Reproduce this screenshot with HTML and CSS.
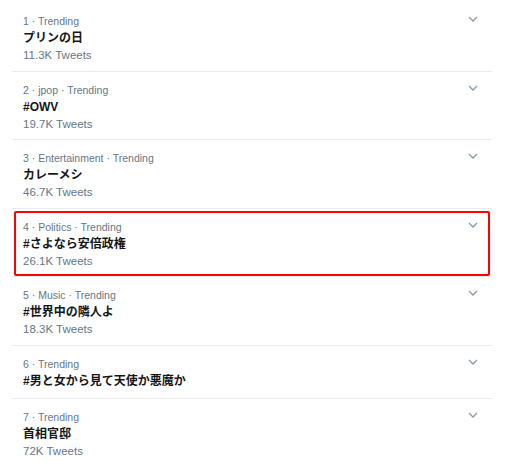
FILE: index.html
```html
<!DOCTYPE html>
<html lang="ja">
<head>
<meta charset="utf-8">
<link rel="stylesheet" href="styles.css">
</head>
<body>
<div class="trends">
  <div class="trend">
    <div class="text">
      <div class="meta">1 · Trending</div>
      <div class="title">プリンの日</div>
      <div class="count">11.3K Tweets</div>
    </div>
    <svg class="chev" viewBox="0 0 10 6" width="10" height="6"><path d="M1 1 L5 5 L9 1" fill="none" stroke="#8899a6" stroke-width="1.3"/></svg>
  </div>
  <div class="trend">
    <div class="text">
      <div class="meta">2 · jpop · Trending</div>
      <div class="title">#OWV</div>
      <div class="count">19.7K Tweets</div>
    </div>
    <svg class="chev" viewBox="0 0 10 6" width="10" height="6"><path d="M1 1 L5 5 L9 1" fill="none" stroke="#8899a6" stroke-width="1.3"/></svg>
  </div>
  <div class="trend">
    <div class="text">
      <div class="meta">3 · Entertainment · Trending</div>
      <div class="title">カレーメシ</div>
      <div class="count">46.7K Tweets</div>
    </div>
    <svg class="chev" viewBox="0 0 10 6" width="10" height="6"><path d="M1 1 L5 5 L9 1" fill="none" stroke="#8899a6" stroke-width="1.3"/></svg>
  </div>
  <div class="trend highlighted">
    <div class="text">
      <div class="meta">4 · Politics · Trending</div>
      <div class="title">#さよなら安倍政権</div>
      <div class="count">26.1K Tweets</div>
    </div>
    <svg class="chev" viewBox="0 0 10 6" width="10" height="6"><path d="M1 1 L5 5 L9 1" fill="none" stroke="#8899a6" stroke-width="1.3"/></svg>
  </div>
  <div class="trend">
    <div class="text">
      <div class="meta">5 · Music · Trending</div>
      <div class="title">#世界中の隣人よ</div>
      <div class="count">18.3K Tweets</div>
    </div>
    <svg class="chev" viewBox="0 0 10 6" width="10" height="6"><path d="M1 1 L5 5 L9 1" fill="none" stroke="#8899a6" stroke-width="1.3"/></svg>
  </div>
  <div class="trend short">
    <div class="text">
      <div class="meta">6 · Trending</div>
      <div class="title">#男と女から見て天使か悪魔か</div>
    </div>
    <svg class="chev" viewBox="0 0 10 6" width="10" height="6"><path d="M1 1 L5 5 L9 1" fill="none" stroke="#8899a6" stroke-width="1.3"/></svg>
  </div>
  <div class="trend">
    <div class="text">
      <div class="meta">7 · Trending</div>
      <div class="title">首相官邸</div>
      <div class="count">72K Tweets</div>
    </div>
    <svg class="chev" viewBox="0 0 10 6" width="10" height="6"><path d="M1 1 L5 5 L9 1" fill="none" stroke="#8899a6" stroke-width="1.3"/></svg>
  </div>
</div>
</body>
</html>
```
FILE: styles.css
```css
html, body {
  margin: 0;
  padding: 0;
  background: #ffffff;
}
body {
  font-family: "Liberation Sans", "Noto Sans CJK JP", sans-serif;
}
.trends {
  width: 480px;
  margin-left: 12px;
  padding-top: 3px;
}
.trend {
  position: relative;
  display: flex;
  justify-content: space-between;
  align-items: flex-start;
  padding: 10px 14px 6.5px 11px;
  border-bottom: 1px solid #e6ecf0;
}
.trend.short {
  padding-bottom: 8px;
}
.text {
  display: flex;
  flex-direction: column;
}
.meta {
  font-size: 10.5px;
  line-height: 17px;
  color: #657786;
}
.title {
  font-family: "Liberation Sans", "Noto Sans CJK JP", sans-serif;
  font-size: 12px;
  font-weight: 700;
  line-height: 17px;
  color: #14171a;
}
.count {
  font-size: 11.5px;
  line-height: 17px;
  color: #657786;
}
.chev {
  margin-top: 3px;
}
.highlighted::after {
  content: "";
  position: absolute;
  left: 2px;
  right: 2px;
  top: 2px;
  bottom: 0;
  border: 2px solid #ff0000;
  border-radius: 2px;
}
```
